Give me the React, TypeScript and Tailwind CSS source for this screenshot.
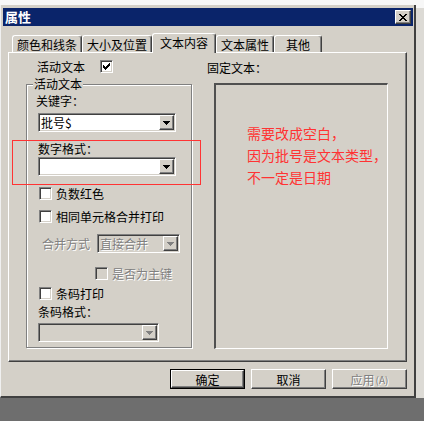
import React from "react";

const sunken =
  "border border-t-[#808080] border-l-[#808080] border-b-white border-r-white shadow-[inset_1px_1px_0_#404040,inset_-1px_-1px_0_#d4d0c8]";
const raised =
  "border border-t-white border-l-white border-b-[#404040] border-r-[#404040] shadow-[inset_-1px_-1px_0_#808080,inset_1px_1px_0_#d4d0c8]";
const disabledText = "text-[#808080] [text-shadow:1px_1px_0_#ffffff]";

function CheckMark() {
  const px: [number, number][] = [
    [6, 0],
    [5, 1], [6, 1],
    [0, 2], [4, 2], [5, 2], [6, 2],
    [0, 3], [1, 3], [3, 3], [4, 3], [5, 3],
    [0, 4], [1, 4], [2, 4], [3, 4], [4, 4],
    [1, 5], [2, 5], [3, 5],
    [2, 6],
  ];
  return (
    <svg width="7" height="7" viewBox="0 0 7 7" shapeRendering="crispEdges">
      {px.map(([x, y], i) => (
        <rect key={i} x={x} y={y} width="1" height="1" fill="#000" />
      ))}
    </svg>
  );
}

function CloseX() {
  const rows = [
    "##....##",
    ".##..##.",
    "..####..",
    "...##...",
    "..####..",
    ".##..##.",
    "##....##",
  ];
  return (
    <svg width="8" height="7" viewBox="0 0 8 7" shapeRendering="crispEdges">
      {rows.flatMap((r, y) =>
        r.split("").map((c, x) =>
          c === "#" ? <rect key={`${x}-${y}`} x={x} y={y} width="1" height="1" fill="#000" /> : null
        )
      )}
    </svg>
  );
}

function Arrow({ disabled }: { disabled?: boolean }) {
  return (
    <svg width="7" height="4" viewBox="0 0 7 4" shapeRendering="crispEdges">
      <rect x="0" y="0" width="7" height="1" fill={disabled ? "#808080" : "#000"} />
      <rect x="1" y="1" width="5" height="1" fill={disabled ? "#808080" : "#000"} />
      <rect x="2" y="2" width="3" height="1" fill={disabled ? "#808080" : "#000"} />
      <rect x="3" y="3" width="1" height="1" fill={disabled ? "#808080" : "#000"} />
    </svg>
  );
}

function Checkbox({ checked, disabled }: { checked?: boolean; disabled?: boolean }) {
  return (
    <div
      className={`w-[13px] h-[13px] shrink-0 flex items-center justify-center ${sunken} ${
        disabled ? "bg-[#d4d0c8]" : "bg-white"
      }`}
    >
      {checked && <CheckMark />}
    </div>
  );
}

function Combo({
  className,
  text,
  disabled,
}: {
  className: string;
  text?: string;
  disabled?: boolean;
}) {
  return (
    <div
      className={`${className} h-[19px] shrink-0 flex items-stretch p-[1px] ${sunken} ${
        disabled ? "bg-[#d4d0c8]" : "bg-white"
      }`}
    >
      <div
        className={`flex-1 flex items-center pl-[1px] text-[12px] leading-[13px] ${
          disabled ? disabledText : "text-black"
        }`}
      >
        {text}
      </div>
      <div className={`w-[15px] flex items-center justify-center bg-[#d4d0c8] ${raised}`}>
        <Arrow disabled={disabled} />
      </div>
    </div>
  );
}

function CheckRow({
  label,
  className,
  checked,
  disabled,
}: {
  label: string;
  className: string;
  checked?: boolean;
  disabled?: boolean;
}) {
  return (
    <div className={`${className} h-[13px] flex items-center gap-[4px]`}>
      <Checkbox checked={checked} disabled={disabled} />
      <span className={`text-[12px] leading-[13px] whitespace-nowrap ${disabled ? disabledText : "text-black"}`}>
        {label}
      </span>
    </div>
  );
}

function Tab({ label, className, selected }: { label: string; className: string; selected?: boolean }) {
  return (
    <div
      className={`${className} flex justify-center rounded-t-[3px] border-t border-l border-t-white border-l-white border-r border-r-[#404040] shadow-[inset_-1px_0_0_#808080] bg-[#d4d0c8] text-[12px] leading-[13px] whitespace-nowrap ${
        selected ? "h-[20px] -mb-[1px] relative z-10 pt-[2px] items-start" : "h-[17px] items-center"
      }`}
    >
      {label}
    </div>
  );
}

function Button({ children, isDefault, disabled }: { children: React.ReactNode; isDefault?: boolean; disabled?: boolean }) {
  const inner = (
    <div
      className={`w-full h-full flex items-center justify-center bg-[#d4d0c8] ${raised} text-[12px] leading-[13px] ${
        disabled ? disabledText : "text-black"
      }`}
    >
      {children}
    </div>
  );
  return isDefault ? (
    <div className="w-[75px] h-[20px] border border-black">{inner}</div>
  ) : (
    <div className="w-[75px] h-[20px]">{inner}</div>
  );
}

export default function App() {
  return (
    <div className="relative w-[424px] h-[421px] overflow-hidden bg-[#6e6e6e] flex flex-col font-['Noto_Sans_CJK_SC','Noto_Sans',sans-serif] text-black">
      <div className="h-[398px] flex bg-[#dcdad5]">
        <div className="w-[416px] flex flex-col">
          <div className="h-[5px] bg-[#f7f7f7]" />
          <div className="h-[393px] flex flex-col bg-[#d4d0c8] border-l border-l-[#f0f0f0] border-r-2 border-r-[#404040] border-b-2 border-b-[#404040] pl-[2px] pr-[1px] pt-[3px]">
            {/* Title bar */}
            <div className="h-[18px] bg-[#0a246a] flex items-center justify-between pl-[2px] pr-[2px]">
              <span className="text-white font-bold text-[13px] leading-[14px]">属性</span>
              <div className={`w-[16px] h-[14px] flex items-center justify-center bg-[#d4d0c8] ${raised}`}>
                <CloseX />
              </div>
            </div>

            {/* Tabs */}
            <div className="mt-[7px] h-[19px] ml-[9px] flex items-end">
              <Tab className="w-[70px]" label="颜色和线条" />
              <Tab className="w-[70px]" label="大小及位置" />
              <Tab className="w-[64px]" label="文本内容" selected />
              <Tab className="w-[58px]" label="文本属性" />
              <Tab className="w-[48px]" label="其他" />
            </div>

            {/* Panel */}
            <div className="ml-[5px] w-[399px] h-[310px] flex border-t border-l border-t-white border-l-white border-r border-b border-r-[#404040] border-b-[#404040] shadow-[inset_-1px_-1px_0_#808080]">
              {/* Left column */}
              <div className="w-[190px] flex flex-col">
                <div className="mt-[7px] h-[13px] pl-[28px] flex items-center">
                  <span className="text-[12px] leading-[13px]">活动文本</span>
                  <div className="ml-[15px]">
                    <Checkbox checked />
                  </div>
                </div>

                <div className="relative mt-[11px] ml-[17px] w-[166px] h-[264px] border border-[#808080] shadow-[inset_1px_1px_0_#ffffff,1px_1px_0_#ffffff] flex flex-col">
                  <span className="absolute left-[6px] -top-[8px] px-[1px] bg-[#d4d0c8] text-[12px] leading-[13px]">
                    活动文本
                  </span>
                  <div className="mt-[9px] ml-[9px] text-[12px] leading-[13px]">关键字：</div>
                  <Combo className="mt-[6px] ml-[11px] w-[138px]" text="批号$" />
                  <div className="mt-[10px] ml-[11px] text-[12px] leading-[13px]">数字格式：</div>
                  <Combo className="mt-[2px] ml-[11px] w-[138px]" />
                  <CheckRow className="mt-[11px] ml-[12px]" label="负数红色" />
                  <CheckRow className="mt-[10px] ml-[12px]" label="相同单元格合并打印" />
                  <div className="mt-[11px] h-[19px] flex items-center">
                    <span className={`ml-[15px] w-[48px] text-[12px] leading-[13px] whitespace-nowrap ${disabledText}`}>
                      合并方式
                    </span>
                    <Combo className="ml-[7px] w-[83px]" text="直接合并" disabled />
                  </div>
                  <CheckRow className="mt-[14px] ml-[68px]" label="是否为主键" disabled />
                  <CheckRow className="mt-[7px] ml-[12px]" label="条码打印" />
                  <div className="mt-[5px] ml-[11px] text-[12px] leading-[13px]">条码格式：</div>
                  <Combo className="mt-[5px] ml-[11px] w-[121px]" disabled />
                </div>
              </div>

              {/* Right column */}
              <div className="flex flex-col">
                <div className="mt-[8px] ml-[8px] text-[12px] leading-[13px]">固定文本：</div>
                <div className="mt-[9px] ml-[15px] w-[174px] h-[266px] border-t-2 border-l-2 border-t-[#505050] border-l-[#505050] border-r border-b border-r-white border-b-white pl-[31px] pt-[37px]">
                  <div className="text-[#ff3333] text-[14px] leading-[22px] whitespace-nowrap">
                    <div>需要改成空白，</div>
                    <div>因为批号是文本类型，</div>
                    <div>不一定是日期</div>
                  </div>
                </div>
              </div>
            </div>

            {/* Buttons */}
            <div className="mt-[7px] h-[20px] flex justify-end gap-[6px] pr-[6px]">
              <Button isDefault>确定</Button>
              <Button>取消</Button>
              <Button disabled>
                应用<span className="text-[10px] ml-[1px]">(A)</span>
              </Button>
            </div>
          </div>
        </div>
        <div className="flex-1 flex flex-col">
          <div className="h-[8px] bg-[#f7f7f7]" />
        </div>
      </div>

      {/* Red annotation rectangle */}
      <div className="absolute left-[12px] top-[140px] w-[189px] h-[45px] border border-[#ff3333] pointer-events-none" />
    </div>
  );
}
